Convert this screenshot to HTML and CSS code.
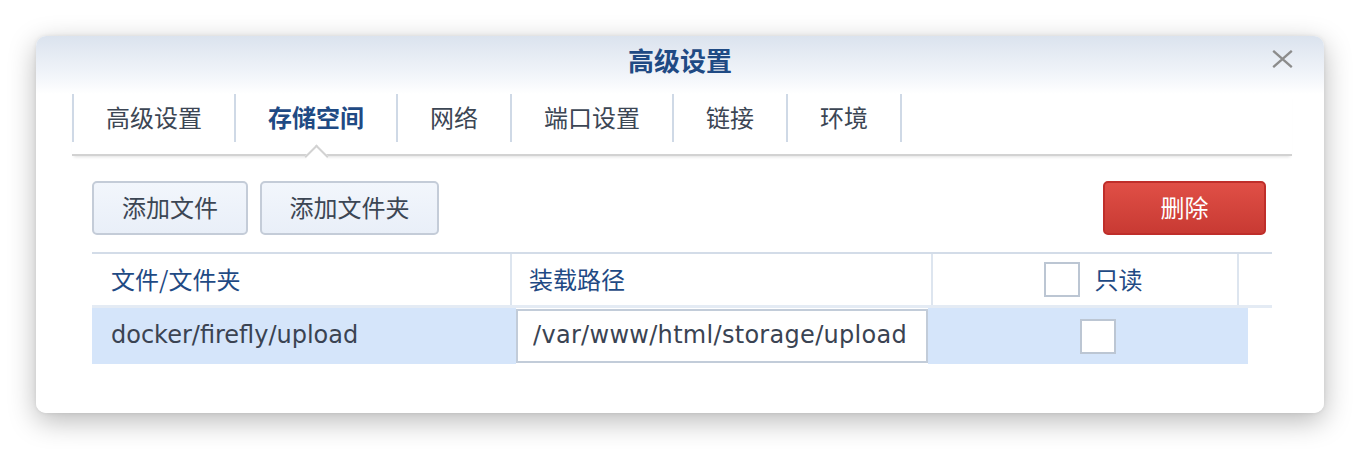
FILE: index.html
```html
<!DOCTYPE html>
<html lang="zh-CN">
<head>
<meta charset="utf-8">
<title>高级设置</title>
<link rel="stylesheet" href="styles.css">
</head>
<body>
<div class="dialog">
  <div class="titlebar">
    <div class="title">高级设置</div>
    <button class="close" aria-label="关闭">
      <svg width="21" height="18" viewBox="0 0 21 18"><path d="M1.2 0.8 L19.8 17.2 M19.8 0.8 L1.2 17.2" stroke="#8c8c8c" stroke-width="2.3" fill="none"/></svg>
    </button>
  </div>
  <div class="tabbar">
    <div class="tab">高级设置</div>
    <div class="tab active">存储空间<span class="notch"></span></div>
    <div class="tab">网络</div>
    <div class="tab">端口设置</div>
    <div class="tab">链接</div>
    <div class="tab last">环境</div>
  </div>
  <div class="content">
    <div class="toolbar">
      <button class="btn">添加文件</button>
      <button class="btn btn-wide">添加文件夹</button>
      <span class="spacer"></span>
      <button class="btn btn-danger">删除</button>
    </div>
    <div class="grid">
      <div class="ghead">
        <div class="hcell c1">文件/文件夹</div>
        <div class="hcell c2">装载路径</div>
        <div class="hcell c3"><span class="check"></span><span class="hlabel">只读</span></div>
        <div class="hcell c4"></div>
      </div>
      <div class="grow">
        <div class="rcell r1">docker/firefly/upload</div>
        <div class="rcell r2"><input class="pathinput" type="text" value="/var/www/html/storage/upload"></div>
        <div class="rcell r3"><span class="check"></span></div>
      </div>
    </div>
  </div>
</div>
</body>
</html>
```

FILE: styles.css
```css
* { box-sizing: border-box; }
html, body { margin: 0; padding: 0; background: #ffffff; }
body {
  padding: 36px;
  font-family: "Noto Sans CJK SC", "Noto Sans", sans-serif;
  color: #3a4352;
}
.dialog {
  width: 1288px;
  height: 377px;
  border-radius: 10px;
  background: linear-gradient(#dbe3ee 0px, #f2f5fa 40px, #ffffff 58px, #ffffff 100%);
  box-shadow: 0 8px 28px rgba(0, 0, 0, 0.28), 0 0 4px rgba(0, 0, 0, 0.08);
  position: relative;
}
.titlebar {
  height: 58px;
  display: flex;
  align-items: center;
  justify-content: center;
  position: relative;
}
.title {
  font-size: 26px;
  font-weight: 700;
  color: #1f4a84;
  line-height: 1;
  margin-top: -10px;
}
.close {
  position: absolute;
  right: 31px;
  top: 14px;
  width: 21px;
  height: 18px;
  padding: 0;
  border: 0;
  background: transparent;
  display: flex;
}
.tabbar {
  margin: 0 32px 0 36px;
  height: 62px;
  display: flex;
  align-items: flex-start;
  border-bottom: 2px solid #d2d2d2;
  box-shadow: 0 3px 3px -2px rgba(0, 0, 0, 0.12);
  position: relative;
}
.tab {
  height: 48px;
  padding: 0 32px;
  border-left: 2px solid #cfd9e6;
  font-size: 24px;
  line-height: 45px;
  color: #3c4654;
  white-space: nowrap;
  position: relative;
}
.tab.last { border-right: 2px solid #cfd9e6; }
.tab.active {
  color: #1f4a84;
  font-weight: 700;
}
.notch {
  position: absolute;
  left: 50%;
  top: 54px;
  width: 17px;
  height: 17px;
  margin-left: -8px;
  background: #ffffff;
  border-top: 2px solid #d2d2d2;
  border-left: 2px solid #d2d2d2;
  transform: rotate(45deg);
}
.content {
  padding: 25px 58px 0 56px;
}
.toolbar {
  display: flex;
  gap: 12px;
  height: 54px;
}
.spacer { flex: 1; }
.btn {
  width: 156px;
  height: 54px;
  border: 2px solid #c4ccd8;
  border-radius: 5px;
  background: linear-gradient(#f2f6fc, #e9eff8);
  font-family: inherit;
  font-size: 24px;
  line-height: 1;
  color: #3c4654;
  padding: 0 0 3px 0;
}
.btn-wide { width: 179px; }
.btn-danger {
  width: 163px;
  border-color: #bf2e2a;
  background: linear-gradient(#e04f46, #c83a33);
  color: #ffffff;
}
.grid {
  margin-top: 17px;
  width: 1180px;
}
.ghead {
  display: grid;
  grid-template-columns: 420px 421px 306px 33px;
  height: 56px;
  border-top: 2px solid #d3dce8;
  border-bottom: 3px solid #e4ebf4;
}
.hcell {
  display: flex;
  align-items: center;
  font-size: 24px;
  color: #1f4a84;
  padding-left: 19px;
  padding-bottom: 2px;
  border-right: 2px solid #dde5ef;
}
.hcell.c2 { padding-left: 17px; }
.hcell.c3 { justify-content: center; padding-left: 16px; padding-bottom: 0; }
.hcell.c4 { border-right: 0; }
.hlabel { margin-left: 15px; padding-bottom: 2px; }
.check {
  display: inline-block;
  width: 36px;
  height: 35px;
  background: #ffffff;
  border: 2px solid #bcc6d3;
}
.grow {
  display: grid;
  grid-template-columns: 424px 412px 320px;
  height: 56px;
  margin-top: 0;
}
.rcell {
  background: #d5e5fa;
  display: flex;
  align-items: center;
}
.r1 {
  padding-left: 19px;
  padding-bottom: 2px;
  font-family: "DejaVu Sans", "Noto Sans CJK SC", sans-serif;
  font-size: 24px;
  color: #3a4352;
}
.r2 { background: transparent; }
.pathinput {
  width: 412px;
  height: 54px;
  border: 2px solid #c2ccd9;
  background: #ffffff;
  font-family: "DejaVu Sans", "Noto Sans CJK SC", sans-serif;
  font-size: 24px;
  letter-spacing: 0.3px;
  color: #3a4352;
  padding: 0 0 2px 15px;
  outline: none;
}
.r3 { justify-content: center; padding-left: 20px; }
```
